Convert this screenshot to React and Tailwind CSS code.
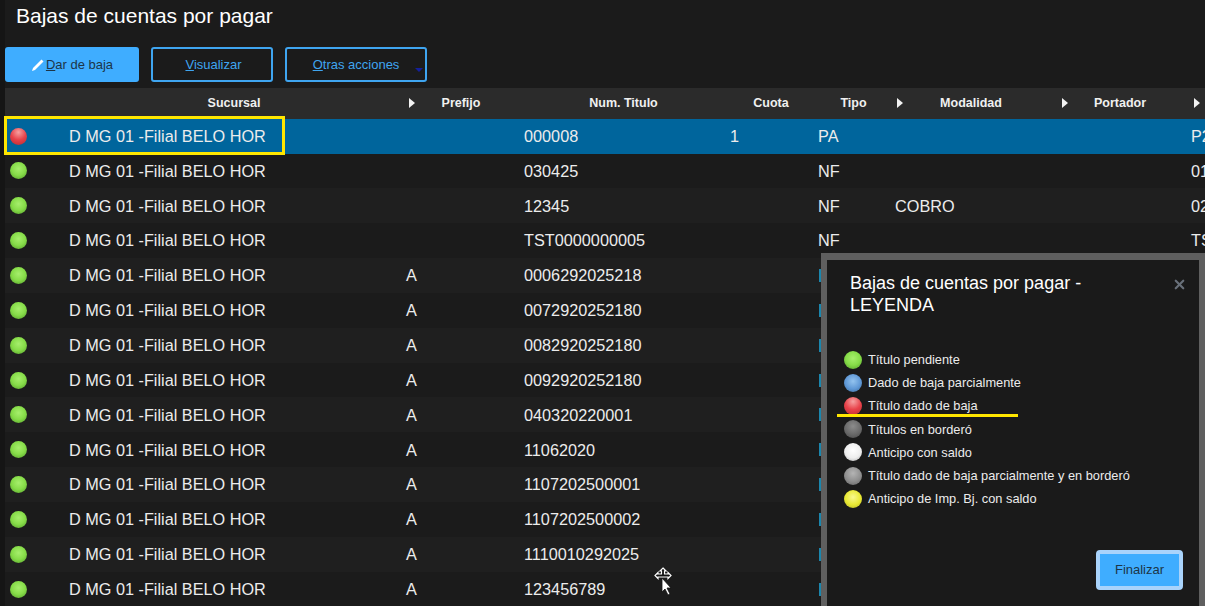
import React from "react";
import { X } from "lucide-react";

const GRID = "grid grid-cols-[59px_337px_118px_206px_88px_77px_163px_125px_27px]";

const ORBS = {
  green: "bg-[radial-gradient(circle_at_50%_40%,#a6ee6c_0%,#86dc48_50%,#66b436_80%,#3f6e2a_100%)]",
  blue: "bg-[radial-gradient(circle_at_50%_40%,#93c3ef_0%,#5f98d6_55%,#4a7cb0_80%,#33506e_100%)]",
  red: "bg-[radial-gradient(circle_at_50%_25%,#f6a0a0_0%,#e8424a_50%,#c9343a_80%,#7c2a30_100%)]",
  dark: "bg-[radial-gradient(circle_at_50%_35%,#8c8c8c_0%,#696969_55%,#555555_80%,#3a3a3a_100%)]",
  white: "bg-[radial-gradient(circle_at_50%_40%,#ffffff_0%,#eeeeee_55%,#c8c8c8_80%,#7e7e7e_100%)]",
  gray: "bg-[radial-gradient(circle_at_50%_35%,#b4b4b4_0%,#8e8e8e_55%,#747474_80%,#4c4c4c_100%)]",
  yellow: "bg-[radial-gradient(circle_at_50%_40%,#f8f88e_0%,#e8e832_55%,#c6c62c_80%,#77772a_100%)]",
};

const ROWS = [
  { orb: "red", prefijo: "", num: "000008", cuota: "1", tipo: "PA", modalidad: "", portador: "P2", selected: true },
  { orb: "green", prefijo: "", num: "030425", tipo: "NF", portador: "01" },
  { orb: "green", prefijo: "", num: "12345", tipo: "NF", modalidad: "COBRO", portador: "02" },
  { orb: "green", prefijo: "", num: "TST0000000005", tipo: "NF", portador: "TS" },
  { orb: "green", prefijo: "A", num: "0006292025218" },
  { orb: "green", prefijo: "A", num: "0072920252180" },
  { orb: "green", prefijo: "A", num: "0082920252180" },
  { orb: "green", prefijo: "A", num: "0092920252180" },
  { orb: "green", prefijo: "A", num: "040320220001" },
  { orb: "green", prefijo: "A", num: "11062020" },
  { orb: "green", prefijo: "A", num: "1107202500001" },
  { orb: "green", prefijo: "A", num: "1107202500002" },
  { orb: "green", prefijo: "A", num: "1110010292025" },
  { orb: "green", prefijo: "A", num: "123456789" },
];

const LEGEND = [
  { orb: "green", label: "Título pendiente" },
  { orb: "blue", label: "Dado de baja parcialmente" },
  { orb: "red", label: "Título dado de baja" },
  { orb: "dark", label: "Títulos en borderó" },
  { orb: "white", label: "Anticipo con saldo" },
  { orb: "gray", label: "Título dado de baja parcialmente y en borderó" },
  { orb: "yellow", label: "Anticipo de Imp. Bj. con saldo" },
];

function Orb({ color, size = "w-[17px] h-[17px]" }) {
  return <span className={`block rounded-full ${size} ${ORBS[color]}`} />;
}

function HeaderArrow() {
  return (
    <svg width="6" height="10" viewBox="0 0 6 10" className="ml-[2px] mr-[18px] shrink-0">
      <polygon points="0,0 6,5 0,10" fill="#f2f2f2" />
    </svg>
  );
}

function HeaderCell({ label, arrow, className = "", labelClass = "" }) {
  return (
    <div className={`flex items-center ${className}`}>
      {arrow && <HeaderArrow />}
      <span className={`flex-1 text-center whitespace-nowrap ${labelClass}`}>{label}</span>
    </div>
  );
}

function Row({ row, index }) {
  const bg = row.selected ? "bg-[#00659c]" : index % 2 === 0 ? "bg-[#1f1f1f]" : "bg-[#1b1b1b]";
  return (
    <div className={`${GRID} ${bg} h-[34.85px] items-center text-[16.25px] text-[#ececec]`}>
      <div className="pl-[5px]"><Orb color={row.orb} /></div>
      <div className="pl-[5px] whitespace-nowrap">D MG 01 -Filial BELO HOR</div>
      <div className="pl-[5px]">{row.prefijo}</div>
      <div className="pl-[5px]">{row.num}</div>
      <div className="pl-[5px]">{row.cuota}</div>
      <div className="pl-[5px]">
        {row.tipo || <span className="block w-[2px] h-[13px] ml-px bg-[#1b86ad]" />}
      </div>
      <div className="pl-[5px]">{row.modalidad}</div>
      <div />
      <div className="pl-[13px] whitespace-nowrap">{row.portador}</div>
    </div>
  );
}

function LegendModal() {
  return (
    <div className="absolute left-[821px] top-[253px] w-[384px] h-[353px] border-x-[6px] border-t-[7px] border-[#5f5f5f] bg-[#1a1a1a] flex flex-col">
      <div className="flex justify-between pl-[23px] pr-[12px] pt-[12px]">
        <h2 className="w-[280px] text-[18px] leading-[22px] text-white">Bajas de cuentas por pagar - LEYENDA</h2>
        <X size={15} strokeWidth={3.5} className="text-[#69707a] mt-[5px]" />
      </div>
      <ul className="flex flex-col mt-[32px] pl-[17px]">
        {LEGEND.map((item) => (
          <li key={item.label} className="flex items-center h-[23.2px] gap-[6px] text-[12.8px] text-[#ececec]">
            <Orb color={item.orb} size="w-[18px] h-[18px]" />
            <span className="whitespace-nowrap">{item.label}</span>
          </li>
        ))}
      </ul>
      <div className="flex-1 flex items-end justify-end pr-[16px] pb-[16px]">
        <button className="w-[87px] h-[40px] rounded-[4px] border-[4px] border-[#a9d3fb] bg-[#3fadff] text-[13px] text-[#1d3547]">
          Finalizar
        </button>
      </div>
      <div className="absolute left-[10px] top-[154px] w-[181px] h-[3px] bg-[#ffe600]" />
    </div>
  );
}

export default function App() {
  return (
    <div className="relative w-[1205px] h-[606px] overflow-hidden bg-[#151515] font-['Liberation_Sans',Arial,sans-serif]">
      <div className="ml-[5px] h-full bg-[#1b1b1b]">
        <h1 className="h-[47px] pl-[11px] pt-[4px] text-[21px] leading-[24px] text-white">Bajas de cuentas por pagar</h1>

        <div className="flex h-[35px] gap-3 text-[13px]">
          <button className="flex items-center justify-center w-[134px] rounded-[3px] bg-[#3fadff] text-[#1d3547]">
            <svg width="14" height="14" viewBox="0 0 14 14" className="mr-px">
              <path d="M1 13 L2 10 L10.5 1.5 L12.5 3.5 L4 12 Z" fill="#ffffff" />
            </svg>
            <span><u>D</u>ar de baja</span>
          </button>
          <button className="w-[122px] rounded-[3px] border-2 border-[#3fa5f0] text-[#3fa5f0] pl-[3px]">
            <u>V</u>isualizar
          </button>
          <button className="relative w-[142px] rounded-[3px] border-2 border-[#3fa5f0] text-[#3fa5f0]">
            <u>O</u>tras acciones
            <span className="absolute right-[2px] bottom-[8px] w-0 h-0 border-x-[4px] border-x-transparent border-t-[4px] border-t-[#14209c]" />
          </button>
        </div>

        <div className={`${GRID} mt-[6px] h-[30.7px] items-center bg-[#2b2b2b] text-[12.5px] font-bold text-[#f0f0f0]`}>
          <div />
          <HeaderCell label="Sucursal" className="pl-[3px]" />
          <HeaderCell label="Prefijo" arrow className="pl-[6px]" labelClass="pr-[30px]" />
          <HeaderCell label="Num. Titulo" className="pl-[3px]" />
          <HeaderCell label="Cuota" className="pl-[4px]" />
          <HeaderCell label="Tipo" className="pl-[4px]" />
          <HeaderCell label="Modalidad" arrow className="pl-[5px]" labelClass="pr-[32px]" />
          <HeaderCell label="Portador" arrow className="pl-[7px]" labelClass="pr-[24px]" />
          <div className="flex items-center pl-[14px]"><HeaderArrow /></div>
        </div>

        {ROWS.map((row, i) => (
          <Row key={row.num} row={row} index={i} />
        ))}
      </div>

      <div className="absolute left-[4px] top-[116px] w-[281px] h-[39px] border-[3px] border-[#ffe600]" />

      <LegendModal />

      <svg width="20" height="30" viewBox="0 0 20 30" className="absolute left-[654px] top-[567px]">
        <path d="M9 1 L12 4 L10.5 4 L10.5 7 L14 7 L14 5.5 L17 8.5 L14 11.5 L14 10 L10.5 10 L7.5 10 L4 10 L4 11.5 L1 8.5 L4 5.5 L4 7 L7.5 7 L7.5 4 L6 4 Z" fill="#111" stroke="#fff" strokeWidth="1.2" />
        <path d="M8 11 L8 25 L11 22 L14 28 L16 27 L13 21 L17 21 Z" fill="#fff" stroke="#111" strokeWidth="0.8" />
      </svg>
    </div>
  );
}
